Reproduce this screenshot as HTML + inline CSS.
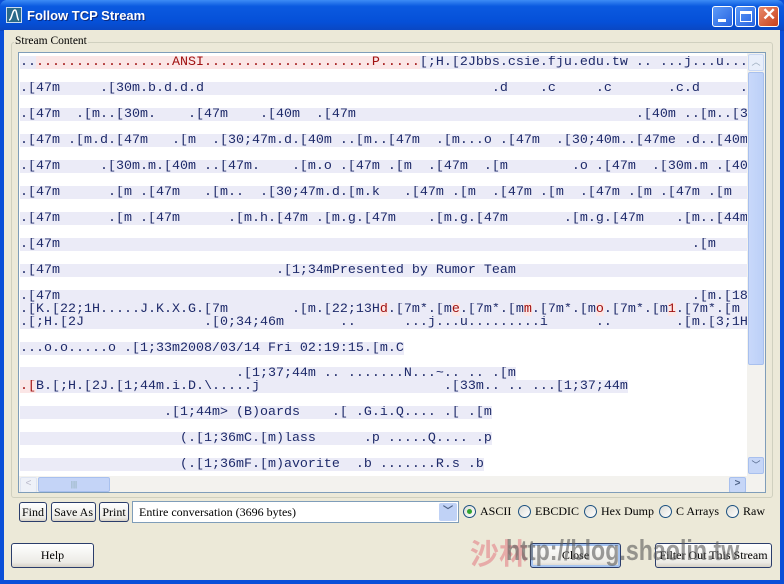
<!DOCTYPE html>
<html><head><meta charset="utf-8"><style>
*{margin:0;padding:0;box-sizing:border-box}
body{width:784px;height:584px;overflow:hidden;background:#0a4fd8;font-family:"Liberation Serif",serif;position:relative}
.abs{position:absolute}
#title{left:0;top:0;width:784px;height:31px;background:linear-gradient(#3d8cf5,#0b5ae0 20%,#0550d8 70%,#0a46c0);border-radius:7px 7px 0 0}
#body{left:4px;top:30px;width:776px;height:550px;background:#ece9d8}
.tb{top:6px;width:21px;height:21px;border:1px solid #fff;border-radius:3px;background:linear-gradient(135deg,#5d9af8,#2663e0)}
#gb{left:11px;top:42px;width:762px;height:456px;border:1px solid #d0d0bf;border-radius:3px}
#txt{left:18px;top:52px;width:748px;height:441px;border:1px solid #7f9db9;background:#fff;overflow:hidden}
.ln{position:absolute;left:1px;height:13px;font:13.33px/13px "Liberation Mono",monospace;color:#1e2a6a;white-space:pre;overflow:hidden;max-width:727px}
.ln span.b{background:#ebebf7}
.full{width:727px;background:#ebebf7}
.r{color:#a01010;background:#fbe6e6}
.btn{position:absolute;border:1px solid #2b3d6b;border-radius:3px;background:linear-gradient(#fff,#ecebe6 80%,#d6d0c5);font:12px "Liberation Serif",serif;color:#000;text-align:center;white-space:nowrap}
.rad{position:absolute;top:505px;width:13px;height:13px;border:1px solid #1c5180;border-radius:50%;background:linear-gradient(135deg,#dcdcd6,#fff)}
.lbl{position:absolute;top:504px;font:12px "Liberation Serif",serif;color:#000}
</style></head><body>
<div id="title" class="abs">
 <div class="abs" style="left:6px;top:7px;width:16px;height:16px;background:#2a6a8a;border:1px solid #cde;"><svg width="14" height="14"><path d="M2 12 C5 12 5 2 8 2 C10 2 10 12 12 12" stroke="#fff" fill="none" stroke-width="1.5"/></svg></div>
 <div class="abs" style="left:27px;top:8px;color:#fff;font:bold 13px 'Liberation Sans',sans-serif;text-shadow:1px 1px #0a2a80">Follow TCP Stream</div>
 <div class="abs tb" style="left:712px"><div class="abs" style="left:5px;top:12px;width:8px;height:3px;background:#fff"></div></div>
 <div class="abs tb" style="left:735px"><div class="abs" style="left:4px;top:4px;width:12px;height:11px;border:1px solid #fff;border-top-width:3px"></div></div>
 <div class="abs tb" style="left:758px;background:linear-gradient(135deg,#e88a6a,#c8401c)"><div class="abs" style="left:3px;top:-2px;color:#fff;font:bold 17px 'Liberation Sans',sans-serif">✕</div></div>
</div>
<div id="body" class="abs"></div>
<div id="gb" class="abs"></div>
<div class="abs" style="left:14px;top:35px;background:#ece9d8;padding:0 1px;font:11.5px 'Liberation Serif',serif;color:#000">Stream Content</div>
<div id="txt" class="abs">
<div class="ln full" style="top:3px"><span>..</span><span class="r">.................ANSI.....................P.....</span>[;H.[2Jbbs.csie.fju.edu.tw .. ...j...u...</div>
<div class="ln full" style="top:29px">.[47m     .[30m.b.d.d.d                                    .d    .c     .c       .c.d     .[</div>
<div class="ln full" style="top:55px">.[47m  .[m..[30m.    .[47m    .[40m  .[47m                                   .[40m ..[m..[30</div>
<div class="ln full" style="top:81px">.[47m .[m.d.[47m   .[m  .[30;47m.d.[40m ..[m..[47m  .[m...o .[47m  .[30;40m..[47me .d..[40m</div>
<div class="ln full" style="top:107px">.[47m     .[30m.m.[40m ..[47m.    .[m.o .[47m .[m  .[47m  .[m        .o .[47m  .[30m.m .[40m</div>
<div class="ln full" style="top:133px">.[47m      .[m .[47m   .[m..  .[30;47m.d.[m.k   .[47m .[m  .[47m .[m  .[47m .[m .[47m .[m</div>
<div class="ln full" style="top:159px">.[47m      .[m .[47m      .[m.h.[47m .[m.g.[47m    .[m.g.[47m       .[m.g.[47m    .[m..[44m</div>
<div class="ln full" style="top:185px">.[47m                                                                               .[m</div>
<div class="ln full" style="top:211px">.[47m                           .[1;34mPresented by Rumor Team</div>
<div class="ln full" style="top:237px">.[47m                                                                               .[m.[18</div>
<div class="ln full" style="top:250px">.[K.[22;1H.....J.K.X.G.[7m        .[m.[22;13H<span class="r">d</span>.[7m*.[m<span class="r">e</span>.[7m*.[m<span class="r">m</span>.[7m*.[m<span class="r">o</span>.[7m*.[m<span class="r">1</span>.[7m*.[m</div>
<div class="ln full" style="top:263px">.[;H.[2J               .[0;34;46m       ..      ...j...u.........i      ..        .[m.[3;1H</div>
<div class="ln" style="top:289px"><span class="b">...o.o.....o .[1;33m2008/03/14 Fri 02:19:15.[m.C</span></div>
<div class="ln" style="top:314px"><span class="b">                           .[1;37;44m .. .......N...~.. .. .[m</span></div>
<div class="ln" style="top:327px"><span class="b"><span class="r">.[</span>B.[;H.[2J.[1;44m.i.D.\.....j                       .[33m.. .. ...[1;37;44m</span></div>
<div class="ln" style="top:353px"><span class="b">                  .[1;44m&gt; (B)oards    .[ .G.i.Q.... .[ .[m</span></div>
<div class="ln" style="top:379px"><span class="b">                    (.[1;36mC.[m)lass      .p .....Q.... .p</span></div>
<div class="ln" style="top:405px"><span class="b">                    (.[1;36mF.[m)avorite  .b .......R.s .b</span></div>
<div class="abs" style="left:728px;top:0;width:18px;height:423px;background:#f3f2ee"></div>
<div class="abs" style="left:729px;top:1px;width:16px;height:17px;border:1px solid #c9d8f5;border-radius:2px;background:#e8eefa;color:#9ab;font:9px sans-serif;text-align:center;line-height:15px">︿</div>
<div class="abs" style="left:729px;top:19px;width:16px;height:293px;border:1px solid #a8c0ee;border-radius:2px;background:linear-gradient(90deg,#c8d8fa,#bcd0f8)"></div>
<div class="abs" style="left:729px;top:404px;width:16px;height:17px;border:1px solid #a8c0ee;border-radius:2px;background:#c6d6f7;color:#4d6185;font:9px sans-serif;text-align:center;line-height:15px">﹀</div>
<div class="abs" style="left:0;top:423px;width:746px;height:17px;background:#f3f2ee"></div>
<div class="abs" style="left:1px;top:424px;width:17px;height:16px;border:1px solid #dde4f2;border-radius:2px;background:#eef1f8;color:#bbc;font:10px sans-serif;text-align:center">&lt;</div>
<div class="abs" style="left:19px;top:424px;width:72px;height:15px;border:1px solid #a8c0ee;border-radius:2px;background:#c4d4f7;color:#8aa;font:8px sans-serif;text-align:center;line-height:13px">|||</div>
<div class="abs" style="left:710px;top:424px;width:17px;height:16px;border:1px solid #a8c0ee;border-radius:2px;background:#c6d6f7;color:#4d6185;font:bold 10px sans-serif;text-align:center">&gt;</div>
</div>
<div class="btn" style="left:19px;top:502px;width:28px;height:20px;line-height:18px">Find</div>
<div class="btn" style="left:51px;top:502px;width:45px;height:20px;line-height:18px">Save As</div>
<div class="btn" style="left:99px;top:502px;width:30px;height:20px;line-height:18px">Print</div>
<div class="abs" style="left:132px;top:501px;width:327px;height:22px;border:1px solid #7f9db9;background:#fff;font:12px 'Liberation Serif',serif;padding:3px 6px">Entire conversation (3696 bytes)</div>
<div class="abs" style="left:439px;top:503px;width:18px;height:18px;border-radius:2px;background:#c0d2f6;color:#4d6185;font:bold 10px sans-serif;text-align:center;line-height:18px">﹀</div>
<div class="rad" style="left:463px"><div class="abs" style="left:3px;top:3px;width:5px;height:5px;border-radius:50%;background:#31a431"></div></div>
<div class="lbl" style="left:480px">ASCII</div>
<div class="rad" style="left:518px"></div><div class="lbl" style="left:535px">EBCDIC</div>
<div class="rad" style="left:584px"></div><div class="lbl" style="left:601px">Hex Dump</div>
<div class="rad" style="left:659px"></div><div class="lbl" style="left:676px">C Arrays</div>
<div class="rad" style="left:726px"></div><div class="lbl" style="left:743px">Raw</div>
<div class="btn" style="left:11px;top:543px;width:83px;height:25px;line-height:23px">Help</div>
<div class="btn" style="left:530px;top:543px;width:91px;height:25px;line-height:23px;box-shadow:inset 0 0 0 2px #a6c4f0">Close</div>
<div class="btn" style="left:655px;top:543px;width:117px;height:25px;line-height:23px">Filter Out This Stream</div>
<div class="abs" style="left:470px;top:535px;font:bold 29px 'Noto Sans CJK SC',sans-serif;color:rgba(225,110,120,0.5);line-height:34px">沙林</div>
<div class="abs" style="left:506px;top:533px;font:bold 29px 'Liberation Sans',sans-serif;color:rgba(90,90,90,0.6);line-height:36px;white-space:nowrap;transform:scaleX(0.8);transform-origin:0 0">http://blog.shaolin.tw</div>
</body></html>
